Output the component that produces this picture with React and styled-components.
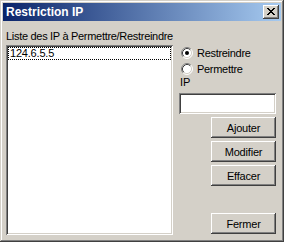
import React from 'react';
import styled, { createGlobalStyle } from 'styled-components';

const FACE = '#D4D0C8';

const Global = createGlobalStyle`
  html, body { margin: 0; padding: 0; background: ${FACE}; }
  body { font-family: "Liberation Sans", Arial, sans-serif; color: #000; }
  * { box-sizing: border-box; }
`;

const Window = styled.div`
  width: 284px;
  height: 242px;
  padding: 3px;
  background: ${FACE};
  box-shadow: inset -1px -1px #404040, inset 1px 1px ${FACE},
    inset -2px -2px #808080, inset 2px 2px #ffffff;
  display: flex;
  flex-direction: column;
`;

const TitleBar = styled.div`
  height: 18px;
  flex: none;
  display: flex;
  align-items: center;
  justify-content: space-between;
  padding: 0 2px 0 3px;
  background: linear-gradient(to right, #0a246a, #a6caf0);
`;

const Title = styled.span`
  color: #fff;
  font-weight: bold;
  font-size: 12px;
  line-height: 18px;
  letter-spacing: 0;
  white-space: nowrap;
`;

const raised = `
  box-shadow: inset -1px -1px #404040, inset 1px 1px #ffffff,
    inset -2px -2px #808080, inset 2px 2px ${FACE};
`;

const sunken = `
  box-shadow: inset 1px 1px #808080, inset -1px -1px #ffffff,
    inset 2px 2px #404040, inset -2px -2px ${FACE};
`;

const CloseButton = styled.button`
  width: 16px;
  height: 14px;
  padding: 0;
  border: none;
  background: ${FACE};
  ${raised}
  display: flex;
  align-items: center;
  justify-content: center;
  padding-left: 0;
  padding-bottom: 1px;
`;

const Client = styled.div`
  flex: 1;
  display: flex;
  gap: 6px;
  padding: 0 5px 4px 3px;
`;

const LeftColumn = styled.div`
  width: 167px;
  display: flex;
  flex-direction: column;
`;

const Caption = styled.div`
  margin-top: 8px;
  margin-bottom: 2px;
  font-size: 11px;
  line-height: 14px;
  height: 14px;
  letter-spacing: -0.3px;
  white-space: nowrap;
`;

const ListBox = styled.div`
  flex: 1;
  background: #fff;
  padding: 2px 2px 2px 2px;
  ${sunken}
`;

const ListItem = styled.div`
  height: 13px;
  border: 1px dotted #000;
  font-size: 11px;
  line-height: 11px;
  padding-left: 1px;
  letter-spacing: -0.2px;
`;

const RightColumn = styled.div`
  width: 97px;
  display: flex;
  flex-direction: column;
  padding-top: 24px;
`;

const RadioRow = styled.label`
  height: 16px;
  display: flex;
  align-items: center;
  gap: 4px;
  padding-left: 2px;
  font-size: 11px;
  line-height: 14px;
  letter-spacing: -0.3px;
  white-space: nowrap;
`;

const FieldLabel = styled.div`
  margin-top: -2px;
  font-size: 11px;
  line-height: 14px;
  padding-left: 1px;
`;

const TextField = styled.input`
  margin-top: 4px;
  width: 97px;
  height: 21px;
  border: none;
  outline: none;
  background: #fff;
  padding: 2px 4px;
  font-family: inherit;
  font-size: 11px;
  ${sunken}
`;

const ButtonStack = styled.div`
  margin-top: 3px;
  display: flex;
  flex-direction: column;
  align-items: flex-end;
  gap: 3px;
`;

const Button = styled.button`
  width: 65px;
  height: 21px;
  padding: 0;
  border: none;
  background: ${FACE};
  font-family: "Liberation Sans", Arial, sans-serif;
  font-size: 11px;
  letter-spacing: -0.2px;
  color: #000;
  ${raised}
`;

const FooterButton = styled(Button)`
  align-self: flex-end;
  margin-top: auto;
  margin-bottom: 1px;
`;

const XGlyph = () => {
  const rows = [
    [[0, 2], [6, 2]],
    [[1, 2], [5, 2]],
    [[2, 4]],
    [[3, 2]],
    [[2, 4]],
    [[1, 2], [5, 2]],
    [[0, 2], [6, 2]],
  ];
  return (
    <svg width="8" height="7" viewBox="0 0 8 7" shapeRendering="crispEdges">
      {rows.map((r, y) =>
        r.map(([x, w]) => <rect key={`${y}-${x}`} x={x} y={y} width={w} height={1} fill="#000" />)
      )}
    </svg>
  );
};

const RadioIcon = ({ checked }) => (
  <svg width="12" height="12" viewBox="0 0 12 12">
    <circle cx="6" cy="6" r="5" fill="#fff" />
    <path d="M2.11 9.89 A5.5 5.5 0 0 1 9.89 2.11" fill="none" stroke="#808080" strokeWidth="1" />
    <path d="M9.89 2.11 A5.5 5.5 0 0 1 2.11 9.89" fill="none" stroke="#ffffff" strokeWidth="1" />
    <path d="M2.82 9.18 A4.5 4.5 0 0 1 9.18 2.82" fill="none" stroke="#404040" strokeWidth="1" />
    <path d="M9.18 2.82 A4.5 4.5 0 0 1 2.82 9.18" fill="none" stroke={FACE} strokeWidth="1" />
    {checked && <circle cx="6" cy="6" r="2" fill="#000" />}
  </svg>
);

export default function App() {
  return (
    <>
      <Global />
      <Window>
        <TitleBar>
          <Title>Restriction IP</Title>
          <CloseButton aria-label="Fermer">
            <XGlyph />
          </CloseButton>
        </TitleBar>
        <Client>
          <LeftColumn>
            <Caption>Liste des IP à Permettre/Restreindre</Caption>
            <ListBox>
              <ListItem>124.6.5.5</ListItem>
            </ListBox>
          </LeftColumn>
          <RightColumn>
            <RadioRow>
              <RadioIcon checked />
              Restreindre
            </RadioRow>
            <RadioRow>
              <RadioIcon />
              Permettre
            </RadioRow>
            <FieldLabel>IP</FieldLabel>
            <TextField defaultValue="" />
            <ButtonStack>
              <Button>Ajouter</Button>
              <Button>Modifier</Button>
              <Button>Effacer</Button>
            </ButtonStack>
            <FooterButton>Fermer</FooterButton>
          </RightColumn>
        </Client>
      </Window>
    </>
  );
}
